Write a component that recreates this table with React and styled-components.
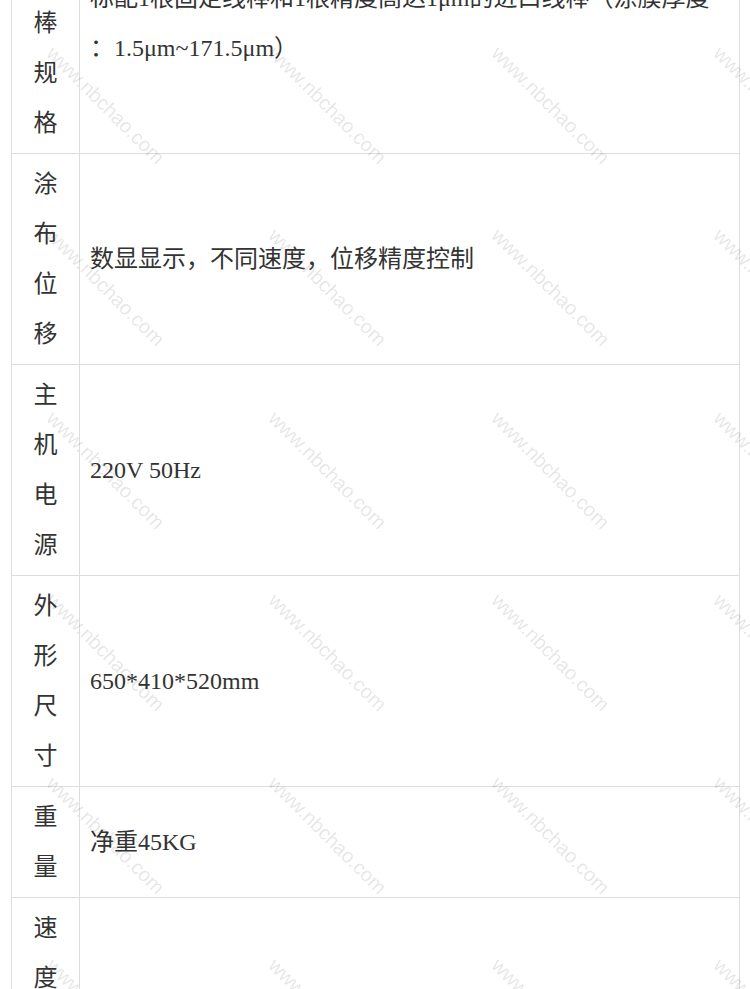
import React from 'react'
import styled, { createGlobalStyle } from 'styled-components'

const GlobalStyle = createGlobalStyle`
  html, body {
    margin: 0;
    padding: 0;
    background: #fff;
  }
`

const Page = styled.div`
  position: relative;
  height: 989px;
  overflow: hidden;
  background: #fff;
  font-family: "Liberation Serif", "Noto Sans CJK SC", serif;
  color: #333;
`

const SpecTable = styled.table`
  border-collapse: collapse;
  width: 729px;
  margin: -108px 0 0 11px;
  font-size: 24px;
  line-height: 50px;
`

const Row = styled.tr``

const Label = styled.td`
  width: 47px;
  padding: 5px 10px;
  border: 1px solid #ddd;
  text-align: center;
  vertical-align: middle;
  word-break: break-all;
`

const Value = styled.td`
  padding: 5px 10px;
  border: 1px solid #ddd;
  text-align: left;
  vertical-align: middle;
`

const Watermark = styled.div`
  position: absolute;
  top: 14px;
  left: -6px;
  display: grid;
  grid-template-columns: repeat(4, 222.5px);
  grid-auto-rows: 182.5px;
  pointer-events: none;
`

const Mark = styled.div`
  display: flex;
  align-items: center;
  justify-content: center;
  span {
    display: block;
    transform: rotate(45deg);
    font-family: "Liberation Sans", Arial, sans-serif;
    font-size: 20px;
    color: rgba(0, 0, 0, 0.11);
    white-space: nowrap;
  }
`

const rows = [
  {
    label: '涂布棒规格',
    value: (
      <>
        标配1根固定线棒和1根精度高达1μm的进口线棒（涂膜厚度
        <br />
        ：1.5μm~171.5μm）
      </>
    ),
  },
  { label: '涂布位移', value: '数显显示，不同速度，位移精度控制' },
  { label: '主机电源', value: '220V 50Hz' },
  { label: '外形尺寸', value: '650*410*520mm' },
  { label: '重量', value: '净重45KG' },
  { label: '速度范围', value: '10~100mm/s' },
]

export default function App() {
  const marks = Array.from({ length: 24 })
  return (
    <Page>
      <GlobalStyle />
      <SpecTable>
        <tbody>
          {rows.map((r, i) => (
            <Row key={i}>
              <Label>{r.label}</Label>
              <Value>{r.value}</Value>
            </Row>
          ))}
        </tbody>
      </SpecTable>
      <Watermark>
        {marks.map((_, i) => (
          <Mark key={i}>
            <span>www.nbchao.com</span>
          </Mark>
        ))}
      </Watermark>
    </Page>
  )
}
